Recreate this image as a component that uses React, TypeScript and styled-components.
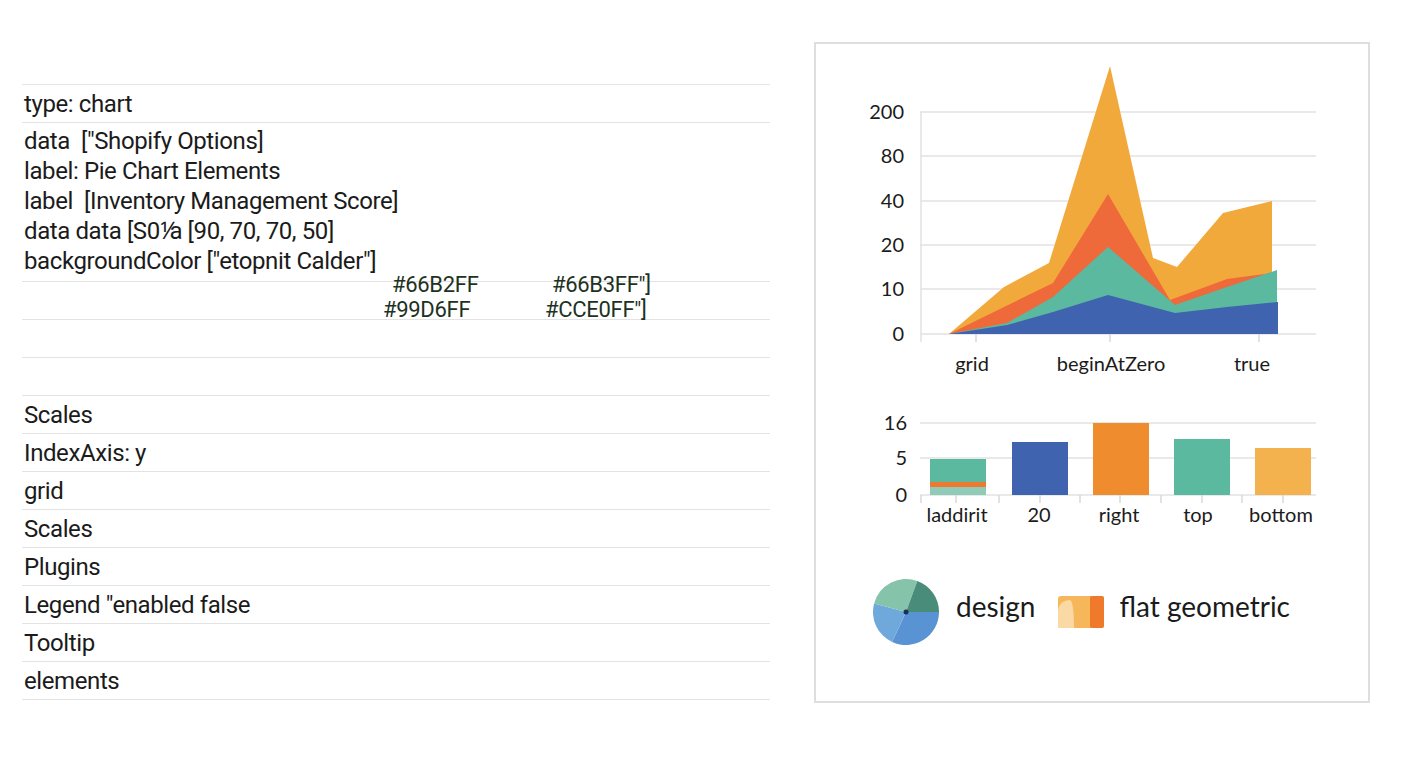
import React from 'react';
import styled, { createGlobalStyle } from 'styled-components';

const GlobalStyle = createGlobalStyle`
  html, body { margin: 0; padding: 0; background: #ffffff; }
  body { font-family: Roboto, "Liberation Sans", sans-serif; color: #1b1b1b; }
`;

const Page = styled.div`
  width: 1408px;
  height: 768px;
  display: flex;
  align-items: flex-start;
  overflow: hidden;
`;

const ConfigColumn = styled.div`
  width: 748px;
  margin: 84px 0 0 22px;
  border-top: 1px solid #e6e6e6;
`;

const Row = styled.div<{ $h?: number }>`
  height: ${({ $h }) => $h ?? 38}px;
  box-sizing: border-box;
  border-bottom: 1px solid #e3e3e3;
  display: flex;
  align-items: center;
  font-size: 24px;
  letter-spacing: -0.4px;
  padding-left: 2px;
`;

const BlockRow = styled(Row)`
  flex-direction: column;
  align-items: flex-start;
  justify-content: flex-start;
  padding-top: 3px;
`;

const BlockLine = styled.div`
  line-height: 30px;
  font-size: 24px;
  white-space: pre;
`;

const HexRow = styled(Row)`
  align-items: flex-start;
  overflow: visible;
`;

const HexBlock = styled.div`
  margin-top: -10px;
  font-size: 22px;
  color: #1d321f;
  letter-spacing: -0.3px;
`;

const HexLine = styled.div<{ $indent: number }>`
  display: flex;
  line-height: 25px;
  padding-left: ${({ $indent }) => $indent}px;
`;

const HexCell = styled.span<{ $w?: number }>`
  width: ${({ $w }) => ($w ? `${$w}px` : 'auto')};
`;

const ChartCard = styled.div`
  width: 556px;
  height: 661px;
  margin: 42px 0 0 44px;
  box-sizing: border-box;
  border: 2px solid #dedede;
  display: flex;
  flex-direction: column;
`;

const ChartSvg = styled.svg`
  display: block;
  font-family: Lato, "Open Sans", sans-serif;
`;

const Legend = styled.div`
  display: flex;
  align-items: center;
  margin: 44px 0 0 56px;
  font-family: Lato, "Open Sans", sans-serif;
  font-size: 28px;
  color: #1b1b1b;
`;

const LegendLabel = styled.span<{ $gap: number }>`
  margin: 0 ${({ $gap }) => $gap}px 0 16px;
  position: relative;
  top: -6px;
`;

// card origin on the page
const OX = 816;
const OY = 44;
const pts = (list: number[][]) => list.map(([x, y]) => `${x - OX},${y - OY}`).join(' ');

const areaGrid = [
  { v: '200', y: 112 },
  { v: '80', y: 156 },
  { v: '40', y: 201 },
  { v: '20', y: 245 },
  { v: '10', y: 289 },
  { v: '0', y: 334 },
];

const AreaChart = () => (
  <ChartSvg width={552} height={340} viewBox="0 0 552 340">
    {areaGrid.map((g) => (
      <g key={g.v}>
        <line x1={920 - OX} x2={1316 - OX} y1={g.y - OY} y2={g.y - OY} stroke="#e2e2e2" strokeWidth={1.5} />
        <text x={904 - OX} y={g.y - OY + 7} fontSize={20} textAnchor="end" fill="#1b1b1b">{g.v}</text>
      </g>
    ))}
    <line x1={921 - OX} x2={921 - OX} y1={112 - OY} y2={342 - OY} stroke="#e2e2e2" strokeWidth={1.5} />
    {[976, 1110, 1259].map((x) => (
      <line key={x} x1={x - OX} x2={x - OX} y1={334 - OY} y2={342 - OY} stroke="#d8d8d8" strokeWidth={1.5} />
    ))}
    <polygon fill="#F2A93B" points={pts([[949, 334], [1004, 287], [1049, 263], [1110, 66], [1153, 258], [1177, 267], [1223, 213], [1272, 201], [1272, 334]])} />
    <polygon fill="#EE6A3A" points={pts([[949, 334], [1004, 307], [1053, 283], [1108, 194], [1170, 300], [1227, 279], [1272, 273], [1272, 334]])} />
    <polygon fill="#5BB9A0" points={pts([[949, 334], [1007, 323], [1053, 297], [1108, 247], [1175, 305], [1227, 287], [1277, 270], [1277, 334]])} />
    <polygon fill="#3F63AE" points={pts([[949, 334], [1007, 325], [1053, 312], [1108, 295], [1175, 313], [1227, 307], [1278, 302], [1278, 334]])} />
    <text x={972 - OX} y={371 - OY} fontSize={20} textAnchor="middle" fill="#1b1b1b">grid</text>
    <text x={1111 - OX} y={371 - OY} fontSize={20} textAnchor="middle" fill="#1b1b1b">beginAtZero</text>
    <text x={1252 - OX} y={371 - OY} fontSize={20} textAnchor="middle" fill="#1b1b1b">true</text>
  </ChartSvg>
);

const BY = 384; // bar chart svg top on the page
const bars = [
  { x: 930, top: 459, color: '#5BB9A0', label: 'laddirit', cx: 957 },
  { x: 1012, top: 442, color: '#3F63AE', label: '20', cx: 1039 },
  { x: 1093, top: 423, color: '#EF8C2E', label: 'right', cx: 1119 },
  { x: 1174, top: 439, color: '#5BB9A0', label: 'top', cx: 1198 },
  { x: 1255, top: 448, color: '#F3B24D', label: 'bottom', cx: 1281 },
];

const BarChart = () => (
  <ChartSvg width={552} height={150} viewBox="0 0 552 150">
    {[{ v: '16', y: 423 }, { v: '5', y: 458 }, { v: '0', y: 495 }].map((g) => (
      <g key={g.v}>
        <line x1={920 - OX} x2={1316 - OX} y1={g.y - BY} y2={g.y - BY} stroke="#e2e2e2" strokeWidth={1.5} />
        <text x={907 - OX} y={g.y - BY + 7} fontSize={20} textAnchor="end" fill="#1b1b1b">{g.v}</text>
      </g>
    ))}
    {[921, 956, 999, 1040, 1080, 1120, 1161, 1202, 1242, 1283].map((x) => (
      <line key={x} x1={x - OX} x2={x - OX} y1={495 - BY} y2={503 - BY} stroke="#d8d8d8" strokeWidth={1.5} />
    ))}
    {bars.map((b) => (
      <rect key={b.label} x={b.x - OX} y={b.top - BY} width={56} height={495 - b.top} fill={b.color} />
    ))}
    <rect x={930 - OX} y={487 - BY} width={56} height={8} fill="#8fcbb6" />
    <rect x={930 - OX} y={482 - BY} width={56} height={5} fill="#EE7A32" />
    {bars.map((b) => (
      <text key={b.label} x={b.cx - OX} y={522 - BY} fontSize={20} textAnchor="middle" fill="#1b1b1b">{b.label}</text>
    ))}
  </ChartSvg>
);

const slice = (a0: number, a1: number, r: number) => {
  const p = (a: number) => [Math.cos((a * Math.PI) / 180) * r, Math.sin((a * Math.PI) / 180) * r];
  const [x0, y0] = p(a0);
  const [x1, y1] = p(a1);
  return `M0,0 L${x0},${y0} A${r},${r} 0 ${a1 - a0 > 180 ? 1 : 0} 1 ${x1},${y1} Z`;
};

const PieIcon = () => (
  <svg width={68} height={68} viewBox="-34 -34 68 68">
    <path d={slice(0, 115, 33)} fill="#5A93D3" />
    <path d={slice(115, 195, 33)} fill="#6FA9DB" />
    <path d={slice(195, 290, 33)} fill="#86C3AB" />
    <path d={slice(290, 360, 33)} fill="#4A8C7A" />
    <circle r={2.5} fill="#1b2f5a" />
  </svg>
);

const GeoIcon = () => (
  <svg width={46} height={32} viewBox="0 0 46 32">
    <rect x={0} y={0} width={46} height={32} rx={3} fill="#F6B65A" />
    <path d="M0 32 V14 Q2 4 12 4 Q16 6 16 32 Z" fill="#FBD9A4" />
    <rect x={32} y={0} width={14} height={32} rx={2} fill="#EF7A2B" />
  </svg>
);

const App: React.FC = () => (
  <Page>
    <GlobalStyle />
    <ConfigColumn>
      <Row>type: chart</Row>
      <BlockRow $h={159}>
        <BlockLine>{'data  ["Shopify Options]'}</BlockLine>
        <BlockLine>label: Pie Chart Elements</BlockLine>
        <BlockLine>{'label  [Inventory Management Score]'}</BlockLine>
        <BlockLine>{'data data [S0⅟a [90, 70, 70, 50]'}</BlockLine>
        <BlockLine>{'backgroundColor ["etopnit Calder"]'}</BlockLine>
      </BlockRow>
      <HexRow>
        <HexBlock>
          <HexLine $indent={368}>
            <HexCell $w={160}>#66B2FF</HexCell>
            <HexCell>#66B3FF"]</HexCell>
          </HexLine>
          <HexLine $indent={359}>
            <HexCell $w={162}>#99D6FF</HexCell>
            <HexCell>#CCE0FF"]</HexCell>
          </HexLine>
        </HexBlock>
      </HexRow>
      <Row />
      <Row />
      <Row>Scales</Row>
      <Row>IndexAxis: y</Row>
      <Row>grid</Row>
      <Row>Scales</Row>
      <Row>Plugins</Row>
      <Row>Legend "enabled false</Row>
      <Row>Tooltip</Row>
      <Row>elements</Row>
    </ConfigColumn>
    <ChartCard>
      <AreaChart />
      <BarChart />
      <Legend>
        <PieIcon />
        <LegendLabel $gap={22}>design</LegendLabel>
        <GeoIcon />
        <LegendLabel $gap={0}>flat geometric</LegendLabel>
      </Legend>
    </ChartCard>
  </Page>
);

export default App;
